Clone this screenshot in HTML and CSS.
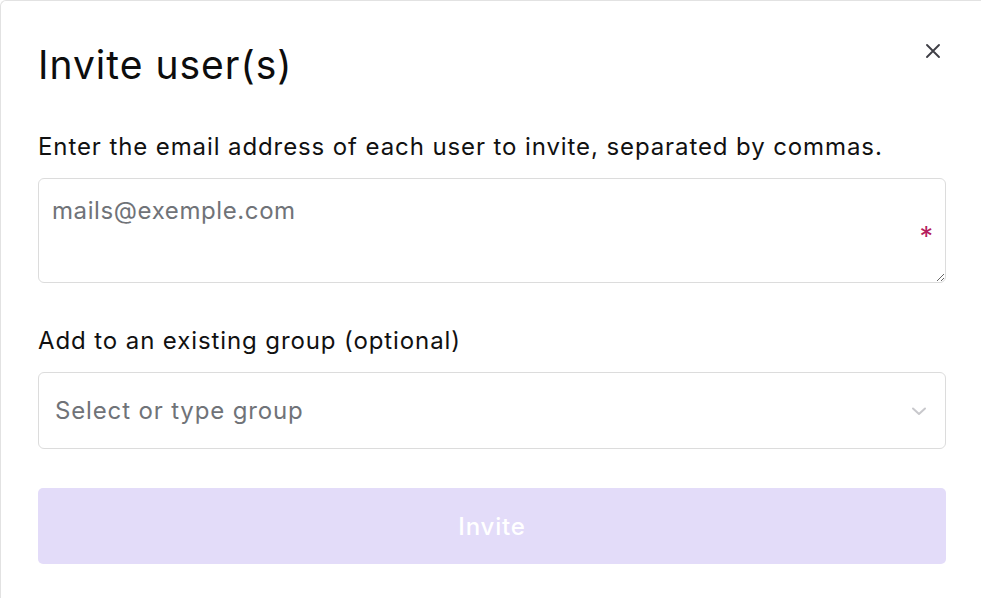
FILE: index.html
```html
<!DOCTYPE html>
<html lang="en">
<head>
<meta charset="utf-8">
<title>Invite user(s)</title>
<link rel="stylesheet" href="styles.css">
</head>
<body>
<div class="dialog">
  <div class="header">
    <h1 class="title">Invite user(s)</h1>
    <button class="close" aria-label="Close">
      <svg width="16" height="16" viewBox="0 0 16 16"><path d="M2 2 L14 14 M14 2 L2 14" stroke="#3f3f46" stroke-width="1.9" stroke-linecap="round" fill="none"/></svg>
    </button>
  </div>
  <label class="label">Enter the email address of each user to invite, separated by commas.</label>
  <div class="textarea-wrap">
    <textarea class="textarea" placeholder="mails@exemple.com"></textarea>
    <span class="required">*</span>
  </div>
  <label class="label label-group">Add to an existing group (optional)</label>
  <div class="select">
    <span class="select-placeholder">Select or type group</span>
    <svg class="chevron" width="18" height="12" viewBox="0 0 18 12"><path d="M3 3.5 L9 9 L15 3.5" stroke="#c8c8cc" stroke-width="2" fill="none" stroke-linecap="round" stroke-linejoin="round"/></svg>
  </div>
  <button class="invite">Invite</button>
</div>
</body>
</html>
```
FILE: styles.css
```css
html, body {
  margin: 0;
  padding: 0;
  background: #ffffff;
}
body {
  font-family: Inter, "Noto Sans", sans-serif;
  color: #111111;
}
.dialog {
  box-sizing: border-box;
  width: 981px;
  height: 598px;
  border-top: 1px solid #e2e2e2;
  border-left: 1px solid #e2e2e2;
  border-top-left-radius: 6px;
  padding: 37px 35px 0 37px;
  display: flex;
  flex-direction: column;
}
.header {
  display: flex;
  justify-content: space-between;
  align-items: flex-start;
}
.title {
  margin: 0;
  font-size: 39px;
  font-weight: 400;
  line-height: 54px;
  letter-spacing: 1px;
  color: #0d0d0d;
}
.close {
  border: 0;
  background: transparent;
  padding: 0;
  margin: 5px 5px 0 0;
  width: 16px;
  height: 16px;
  display: flex;
}
.label {
  display: block;
  font-size: 24px;
  line-height: 30px;
  letter-spacing: 0.9px;
  margin-top: 40px;
  color: #111111;
}
.label-group {
  margin-top: 43px;
}
.textarea-wrap {
  position: relative;
  margin-top: 16px;
  height: 105px;
}
.textarea {
  box-sizing: border-box;
  width: 100%;
  height: 105px;
  border: 1px solid #dcdcdc;
  border-radius: 6px;
  padding: 17px 13px;
  font-family: Inter, "Noto Sans", sans-serif;
  font-size: 24px;
  letter-spacing: 0.6px;
  line-height: 30px;
  color: #111;
  resize: vertical;
  outline: none;
  display: block;
}
.textarea::placeholder {
  color: #707378;
}
.required {
  position: absolute;
  right: 13px;
  top: 44px;
  color: #b51d5e;
  font-size: 27px;
  line-height: 30px;
}
.select {
  box-sizing: border-box;
  margin-top: 16px;
  height: 77px;
  border: 1px solid #dcdcdc;
  border-radius: 6px;
  display: flex;
  align-items: center;
  justify-content: space-between;
  padding: 0 17px 0 16px;
}
.select-placeholder {
  font-size: 24px;
  letter-spacing: 0.85px;
  color: #707378;
}
.invite {
  margin-top: 39px;
  height: 76px;
  border: 0;
  border-radius: 5px;
  background: #e3dcf9;
  color: #ffffff;
  font-family: Inter, "Noto Sans", sans-serif;
  font-size: 24px;
  letter-spacing: 0.8px;
  font-weight: 500;
}
```
